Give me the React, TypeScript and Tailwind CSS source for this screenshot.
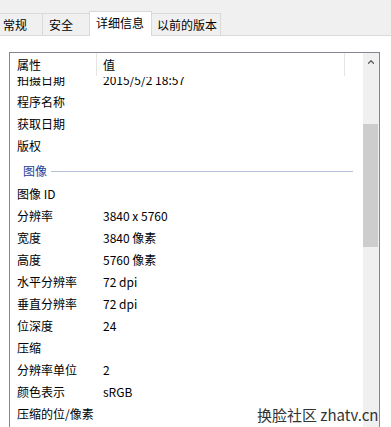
import { ChevronUp } from "lucide-react";

type Row = { label: string; value?: string; group?: boolean };

const rows: Row[] = [
  { label: "拍摄日期", value: "2015/5/2 18:57" },
  { label: "程序名称" },
  { label: "获取日期" },
  { label: "版权" },
  { label: "图像", group: true },
  { label: "图像 ID" },
  { label: "分辨率", value: "3840 x 5760" },
  { label: "宽度", value: "3840 像素" },
  { label: "高度", value: "5760 像素" },
  { label: "水平分辨率", value: "72 dpi" },
  { label: "垂直分辨率", value: "72 dpi" },
  { label: "位深度", value: "24" },
  { label: "压缩" },
  { label: "分辨率单位", value: "2" },
  { label: "颜色表示", value: "sRGB" },
  { label: "压缩的位/像素" },
  { label: "" },
];

export default function App() {
  return (
    <div
      className="relative w-[391px] h-[427px] overflow-hidden bg-white text-[12px] text-black"
      style={{ fontFamily: '"Noto Sans CJK SC", "Noto Sans", sans-serif' }}
    >
      {/* Tab strip */}
      <div className="flex h-[36px] items-end border-b border-[#d9d9d9] bg-[#f0f0f0]">
        <div className="ml-[-4px] flex h-[22px] w-[46px] items-center border-l border-t border-[#d9d9d9] pl-[6px] pt-[1px] leading-[16px]">
          常规
        </div>
        <div className="flex h-[22px] w-[47px] items-center border-l border-t border-[#d9d9d9] pl-[6px] pt-[1px] leading-[16px]">
          安全
        </div>
        <div className="relative z-10 mb-[-1px] flex h-[25px] w-[63px] items-start border-x border-t border-[#d9d9d9] bg-white pl-[6px] pt-[3px] leading-[16px]">
          详细信息
        </div>
        <div className="flex h-[22px] w-[69px] items-center border-r border-t border-[#d9d9d9] pl-[5px] pt-[1px] leading-[16px]">
          以前的版本
        </div>
      </div>

      {/* List box */}
      <div className="ml-[9px] mt-[16px] flex h-[420px] w-[371px] border border-[#828790]">
        <div className="flex min-w-0 flex-1 flex-col">
          {/* Header */}
          <div className="relative z-10 flex h-[24px] shrink-0 items-center bg-white leading-[16px]">
            <div className="w-[86px] pl-[7px]">属性</div>
            <div className="h-[23px] w-px self-start bg-[#e5e5e5]" />
            <div className="flex-1 pl-[6px]">值</div>
            <div className="mr-[18px] h-[23px] w-px self-start bg-[#e5e5e5]" />
          </div>
          {/* Rows */}
          <div className="flex-1 overflow-hidden">
            <div className="mt-[-8px] flex flex-col">
              {rows.map((r, i) =>
                r.group ? (
                  <div key={i} className="flex h-[26px] items-center pl-[13px] pt-[2px] leading-[16px]">
                    <span className="text-[#1e3c9a]">{r.label}</span>
                    <div className="ml-[4px] mr-[10px] h-px flex-1 bg-[#b6c2dc]" />
                  </div>
                ) : (
                  <div key={i} className="flex h-[22px] items-center leading-[16px]">
                    <div className="w-[93px] shrink-0 pl-[7px]">{r.label}</div>
                    <div>{r.value}</div>
                  </div>
                )
              )}
            </div>
          </div>
        </div>
        {/* Scrollbar */}
        <div className="flex w-[16px] shrink-0 flex-col bg-[#f0f0f0]">
          <div className="flex h-[17px] items-center justify-center text-[#606060]">
            <ChevronUp size={10} strokeWidth={3} />
          </div>
          <div className="mt-[54px] h-[123px] w-[15px] bg-[#cdcdcd]" />
        </div>
      </div>

      {/* Watermark */}
      <div
        className="absolute bottom-[3px] left-[257px] text-[15px] leading-[18px] text-[#333333]"
        style={{ fontFamily: '"Noto Sans CJK SC", sans-serif' }}
      >
        换脸社区 zhatv.cn
      </div>
    </div>
  );
}
